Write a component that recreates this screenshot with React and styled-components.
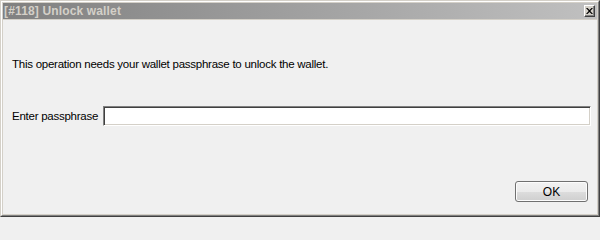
import styled, { createGlobalStyle } from 'styled-components'

const GlobalStyle = createGlobalStyle`
    html, body {
        margin: 0;
        padding: 0;
        background: #f0f0f0;
    }
`;

const Window = styled.div`
    box-sizing: border-box;
    width: 600px;
    height: 217px;
    display: flex;
    flex-direction: column;
    background: #d4d0c8;
    border: 1px solid;
    border-color: #d4d0c8 #404040 #404040 #d4d0c8;
`;

const Frame = styled.div`
    flex: 1;
    display: flex;
    flex-direction: column;
    border: 1px solid;
    border-color: #ffffff #808080 #808080 #ffffff;
    padding: 1px;
    min-height: 0;
`;

const TitleBar = styled.div`
    height: 16px;
    flex-shrink: 0;
    display: flex;
    align-items: center;
    justify-content: space-between;
    padding: 0 2px 0 1px;
    background: linear-gradient(to right, #808080, #c0c0c0);
    margin-bottom: 1px;
`;

const Title = styled.span`
    font-family: "Liberation Sans", Arial, sans-serif;
    font-weight: bold;
    font-size: 12px;
    letter-spacing: 0.15px;
    color: #d4d0c8;
    white-space: nowrap;
`;

const CloseButton = styled.button`
    box-sizing: border-box;
    width: 11px;
    height: 12px;
    padding: 0;
    display: flex;
    align-items: center;
    justify-content: center;
    background: #d4d0c8;
    border: 1px solid;
    border-color: #ffffff #404040 #404040 #ffffff;
    box-shadow: inset -1px -1px 0 #808080;
`;

const Body = styled.div`
    flex: 1;
    display: flex;
    flex-direction: column;
    background: #f0f0f0;
    padding: 36px 6px 12px 9px;
    font-family: "Liberation Sans", Arial, sans-serif;
    font-size: 11.5px;
    letter-spacing: -0.25px;
    color: #000;
`;

const Message = styled.p`
    margin: 0;
    line-height: 16px;
`;

const Row = styled.div`
    display: flex;
    align-items: center;
    gap: 5px;
    margin-top: 34px;
`;

const Label = styled.label`
    white-space: nowrap;
`;

const PassInput = styled.input`
    box-sizing: border-box;
    flex: 1;
    height: 20px;
    margin: 0;
    background: #fff;
    border: 1px solid;
    border-color: #808080 #ffffff #ffffff #808080;
    box-shadow: inset 1px 1px 0 #404040, inset -1px -1px 0 #d4d0c8;
    outline: none;
`;

const Footer = styled.div`
    margin-top: auto;
    display: flex;
    justify-content: flex-end;
    padding-right: 3px;
`;

const OkButton = styled.button`
    box-sizing: border-box;
    width: 73px;
    height: 21px;
    font-family: "Liberation Sans", Arial, sans-serif;
    font-size: 12px;
    color: #000;
    border: 1px solid #707070;
    border-radius: 3px;
    background: linear-gradient(#f2f2f2 0%, #ebebeb 50%, #dddddd 51%, #cfcfcf 100%);
    box-shadow: inset 0 0 0 1px #fcfcfc;
`;

function CloseIcon() {
    return (
        <svg width="7" height="6" viewBox="0 0 7 6">
            <path d="M0 0 L1.5 0 L3.5 2 L5.5 0 L7 0 L4.3 3 L7 6 L5.5 6 L3.5 4 L1.5 6 L0 6 L2.7 3 Z" fill="#000" />
        </svg>
    )
}

export default function App() {
    return (
        <>
            <GlobalStyle />
            <Window>
                <Frame>
                    <TitleBar>
                        <Title>[#118] Unlock wallet</Title>
                        <CloseButton><CloseIcon /></CloseButton>
                    </TitleBar>
                    <Body>
                        <Message>This operation needs your wallet passphrase to unlock the wallet.</Message>
                        <Row>
                            <Label>Enter passphrase</Label>
                            <PassInput type="password" />
                        </Row>
                        <Footer>
                            <OkButton>OK</OkButton>
                        </Footer>
                    </Body>
                </Frame>
            </Window>
        </>
    )
}
